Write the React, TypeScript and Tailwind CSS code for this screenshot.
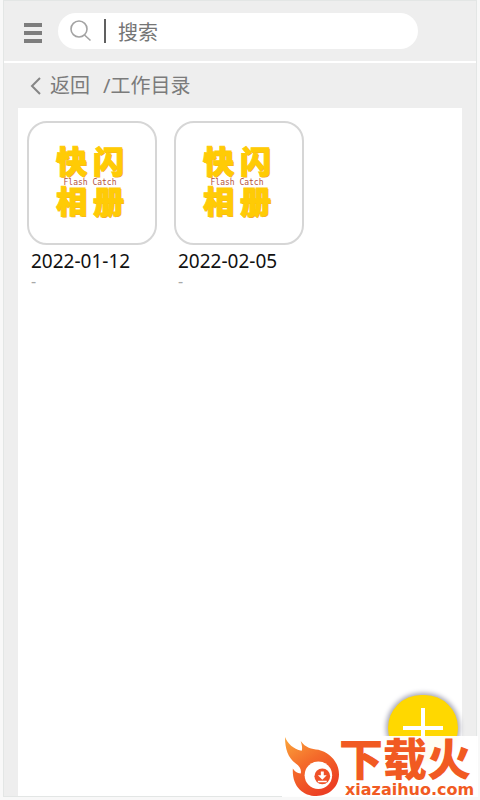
import { useState } from 'react';

const albums = [
  { date: '2022-01-12', note: '-' },
  { date: '2022-02-05', note: '-' },
];

function AlbumCover() {
  return (
    <div className="mr-1 mb-2 flex flex-col items-center font-black text-[#ffcb05]">
      <div className="flex gap-1.5 text-[31px] leading-10 [-webkit-text-stroke:1px_#ffcb05] [text-shadow:1px_1px_0_#f5a623]">
        <span>快</span>
        <span>闪</span>
      </div>
      <p className="font-['DejaVu_Sans_Mono'] text-[8px] leading-1 font-normal text-[#b5543c]">Flash Catch</p>
      <div className="flex gap-1.5 text-[31px] leading-8 [-webkit-text-stroke:1px_#ffcb05] [text-shadow:1px_1px_0_#f5a623]">
        <span>相</span>
        <span>册</span>
      </div>
    </div>
  );
}

function FlameLogo() {
  return (
    <svg viewBox="0 0 56 62" className="h-[61px] w-[55px] shrink-0" aria-hidden="true">
      <defs>
        <linearGradient id="flame" x1="0" y1="0" x2="0.6" y2="1">
          <stop offset="0" stopColor="#fba63c" />
          <stop offset="0.5" stopColor="#f46a2a" />
          <stop offset="1" stopColor="#ec3f23" />
        </linearGradient>
      </defs>
      <path
        d="M1 1C4 8 9 13 18 15C19 12 18 8 17 5C22 12 28 13 35 14C47 17 56 27 56 39C56 52 46 61 33 61C19 61 8 51 9 33C11 36 13 38 17 38C18 34 16 31 12 28C4 22 1 13 1 1Z"
        fill="url(#flame)"
      />
      <circle cx="35" cy="40" r="14" fill="#fff" />
      <circle cx="39" cy="41" r="8" fill="#ef5128" />
      <path d="M37.500 36h3v4h3L39 44.500l-4.500-4.500h3zM34.500 45.500h9v1.500h-9z" fill="#fff" />
    </svg>
  );
}

function Watermark() {
  return (
    <div className="absolute right-0.5 bottom-[3px] z-20 flex h-[61px] w-[196px] items-start bg-white/95 pl-0.5">
      <FlameLogo />
      <div className="whitespace-nowrap text-[#f15a22]">
        <p className="text-[44px] leading-[46px] font-black">下载火</p>
        <p className="pl-1.5 font-['DejaVu_Sans'] text-base leading-4 font-bold">xiazaihuo.com</p>
      </div>
    </div>
  );
}

export default function App() {
  const [query, setQuery] = useState('');

  return (
    <div className="relative flex min-h-screen flex-col overflow-hidden bg-[#f8f8f8] px-[3px] pb-[3px] font-['Noto_Sans','Noto_Sans_CJK_SC',sans-serif]">
      <div className="flex flex-1 flex-col border border-[#e3e6e5] bg-[#eeeeee]">
        <header className="flex h-[62px] items-center border-b-2 border-white pl-5">
          <button type="button" aria-label="菜单" className="mt-1 flex w-[18px] flex-col gap-1">
            <span className="h-1 bg-[#7d7d7d]" />
            <span className="h-1 bg-[#7d7d7d]" />
            <span className="h-1 bg-[#7d7d7d]" />
          </button>
          <label className="mr-[58px] ml-4 flex h-9 flex-1 items-center rounded-full bg-white pl-3">
            <svg viewBox="0 0 22 22" className="size-[22px] shrink-0" fill="none" stroke="#a3a3a3" strokeWidth="1.6">
              <circle cx="9" cy="9" r="8" />
              <path d="M14.500 15l6 5.500" />
            </svg>
            <span className="mr-3 ml-3 h-6 w-0.5 shrink-0 bg-[#606060]" />
            <input
              type="text"
              aria-label="搜索"
              placeholder="搜索"
              value={query}
              onChange={e => setQuery(e.target.value)}
              className="min-w-0 flex-1 bg-transparent pt-1 text-xl leading-7 text-gray-700 outline-none placeholder:text-[#757575]"
            />
          </label>
        </header>

        <nav className="flex h-[45px] items-center pl-[26px] text-xl text-[#7b7b7b]">
          <a href="#back" className="flex items-center gap-2">
            <svg viewBox="0 0 12 18" className="h-[18px] w-3" fill="none" stroke="#858585" strokeWidth="2">
              <path d="M10 1L2 9l8 8" />
            </svg>
            返回
          </a>
          <span className="ml-[13px]">/工作目录</span>
        </nav>

        <main className="mx-[14px] flex flex-1 items-start gap-[17px] bg-white px-[9px] pt-[13px]">
          {albums
            .filter(album => album.date.includes(query))
            .map(album => (
              <a key={album.date} href={`#${album.date}`} className="w-[130px]">
                <div className="flex h-[124px] items-center justify-center rounded-[20px] border-2 border-[#d6d6d6]">
                  <AlbumCover />
                </div>
                <p className="pt-1 pl-1 text-[19px] leading-6 text-[#111111]">{album.date}</p>
                <p className="pl-1 text-base leading-4 text-[#a8a8a8]">{album.note}</p>
              </a>
            ))}
        </main>
      </div>

      <button
        type="button"
        aria-label="新建"
        className="absolute right-[22px] bottom-[39px] z-10 flex h-[66px] w-[70px] items-center justify-center rounded-full bg-[#ffd800] shadow-[0_0_5px_2px_#a5a5b5]"
      >
        <svg viewBox="0 0 40 40" className="size-10" stroke="#fff" strokeWidth="4">
          <path d="M20 0v40M0 20h40" />
        </svg>
      </button>
      <Watermark />
    </div>
  );
}
